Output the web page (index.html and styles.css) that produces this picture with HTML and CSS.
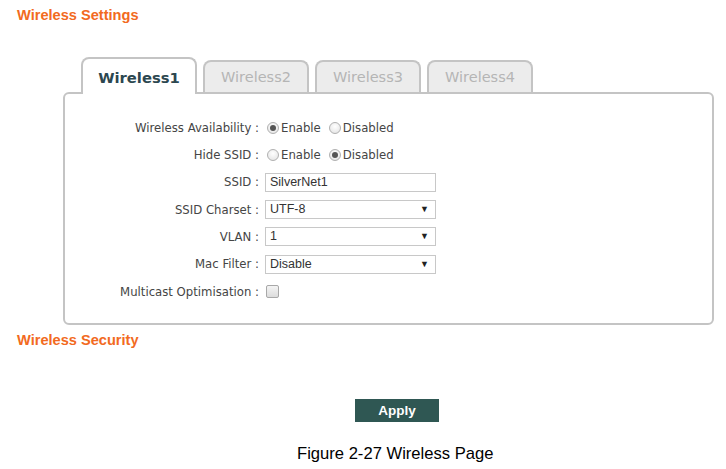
FILE: index.html
```html
<!DOCTYPE html>
<html>
<head>
<meta charset="utf-8">
<link rel="stylesheet" href="styles.css">
</head>
<body>
<h2 class="section-title">Wireless Settings</h2>
<div class="tabs">
  <div class="tab active">Wireless1</div>
  <div class="tab">Wireless2</div>
  <div class="tab">Wireless3</div>
  <div class="tab">Wireless4</div>
</div>
<div class="panel">
  <div class="form">
    <div class="label">Wireless Availability :</div>
    <div class="ctrl"><span class="radio checked"></span><span class="opt">Enable</span><span class="radio"></span><span class="opt">Disabled</span></div>
    <div class="label">Hide SSID :</div>
    <div class="ctrl"><span class="radio"></span><span class="opt">Enable</span><span class="radio checked"></span><span class="opt">Disabled</span></div>
    <div class="label">SSID :</div>
    <div class="ctrl"><div class="field">SilverNet1</div></div>
    <div class="label">SSID Charset :</div>
    <div class="ctrl"><div class="field select">UTF-8</div></div>
    <div class="label">VLAN :</div>
    <div class="ctrl"><div class="field select">1</div></div>
    <div class="label">Mac Filter :</div>
    <div class="ctrl"><div class="field select">Disable</div></div>
    <div class="label">Multicast Optimisation :</div>
    <div class="ctrl"><span class="checkbox"></span></div>
  </div>
</div>
<h2 class="section-title security">Wireless Security</h2>
<div class="actions"><button class="apply">Apply</button></div>
<p class="caption">Figure 2-27 Wireless Page</p>
</body>
</html>
```
FILE: styles.css
```css
html, body {
  margin: 0;
  padding: 0;
  background: #ffffff;
}
body {
  width: 726px;
  height: 469px;
  overflow: hidden;
  font-family: "DejaVu Sans", Verdana, sans-serif;
}
.section-title {
  margin: 0;
  padding: 7px 0 0 17px;
  font-family: "Liberation Sans", Arial, sans-serif;
  font-weight: bold;
  font-size: 14.6px;
  line-height: 16px;
  color: #f26a21;
}
.section-title.security {
  padding-top: 7px;
}
.tabs {
  display: flex;
  align-items: flex-end;
  gap: 6px;
  margin: 34px 0 -2px 81px;
}
.tab {
  box-sizing: border-box;
  width: 106px;
  height: 32px;
  margin-bottom: 2px;
  border: 2px solid #c4c4c4;
  border-bottom: none;
  border-radius: 8px 8px 0 0;
  background: #ececec;
  color: #b5b5b5;
  font-size: 14.5px;
  line-height: 30px;
  text-align: center;
}
.tab.active {
  position: relative;
  z-index: 1;
  width: 116px;
  height: 37px;
  margin-bottom: 0;
  background: #ffffff;
  color: #2c4750;
  font-weight: bold;
  font-size: 14.8px;
  line-height: 38px;
}
.panel {
  box-sizing: border-box;
  width: 651px;
  margin-left: 63px;
  border: 2px solid #c4c4c4;
  border-radius: 6px;
  padding: 20px 0 18px;
}
.form {
  display: grid;
  grid-template-columns: 194px 1fr;
  grid-auto-rows: 27.33px;
  column-gap: 6px;
  align-items: center;
}
.label {
  text-align: right;
  font-size: 11.7px;
  color: #454545;
  white-space: nowrap;
}
.ctrl {
  display: flex;
  align-items: center;
  font-size: 11.7px;
  color: #454545;
  padding-left: 2px;
}
.radio {
  box-sizing: border-box;
  width: 12px;
  height: 12px;
  border-radius: 50%;
  border: 1px solid #b0b0b0;
  background: radial-gradient(circle at 50% 35%, #ffffff 0%, #e4e4e4 90%);
  margin-right: 2px;
  display: inline-flex;
  align-items: center;
  justify-content: center;
}
.radio.checked::after {
  content: "";
  width: 6px;
  height: 6px;
  border-radius: 50%;
  background: #555555;
}
.opt {
  margin-right: 8px;
}
.field {
  box-sizing: border-box;
  width: 171px;
  height: 19px;
  margin-left: -2px;
  border: 1px solid #c8c8c8;
  background: #ffffff;
  padding: 0 4px;
  font-family: "Liberation Sans", Arial, sans-serif;
  font-size: 12.5px;
  line-height: 17px;
  color: #333333;
  position: relative;
}
.field.select::after {
  content: "▼";
  position: absolute;
  right: 6px;
  top: 0;
  font-size: 9px;
  line-height: 17px;
  color: #222222;
}
.checkbox {
  box-sizing: border-box;
  width: 13px;
  height: 13px;
  margin-left: -1px;
  border: 1px solid #a8a8a8;
  border-radius: 2px;
  background: linear-gradient(#f4f4f4, #dcdcdc);
}
.actions {
  margin-top: 51px;
  padding-left: 355px;
}
.apply {
  display: block;
  width: 84px;
  height: 23px;
  border: none;
  background: #2f5753;
  color: #ffffff;
  font-family: "Liberation Sans", Arial, sans-serif;
  font-weight: bold;
  font-size: 13.5px;
  padding: 0;
}
.caption {
  margin: 23px 0 0 297px;
  font-family: "Liberation Sans", Arial, sans-serif;
  font-size: 16.6px;
  line-height: 18px;
  color: #000000;
}
```
